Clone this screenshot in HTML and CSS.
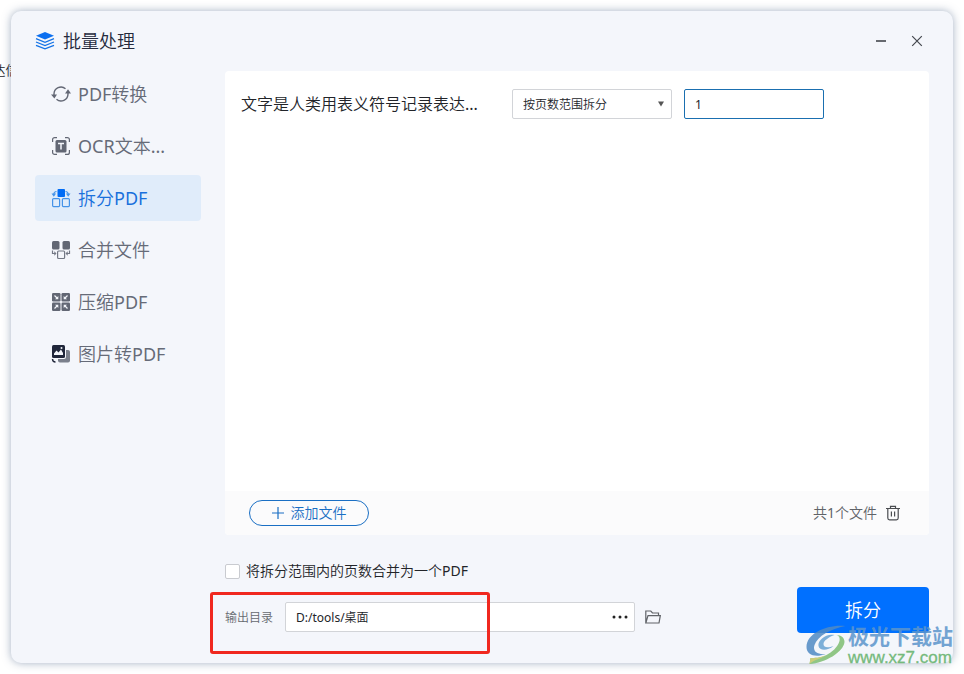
FILE: index.html
```
<!DOCTYPE html>
<html lang="zh-CN">
<head>
<meta charset="utf-8">
<title>批量处理</title>
<link rel="stylesheet" href="styles.css">
</head>
<body>
<div class="backdrop-text"><span>达信</span></div>
<main class="dialog">
  <header class="titlebar">
    <svg class="brand" width="20" height="20" viewBox="0 0 20 20" fill="none" stroke="#1473e6" stroke-width="1.3">
      <path d="M1 4.7 10 1l9 3.7L10 8.4z" fill="#0b6ff0" stroke="none"/>
      <path d="M1 7.7l9 3.6 9-3.6M1 11l9 3.6 9-3.6M1 14.3l9 3.6 9-3.6"/>
    </svg>
    <h1 class="title">批量处理</h1>
    <button class="win-btn" type="button" aria-label="最小化">
      <svg width="12" height="12" viewBox="0 0 12 12"><path d="M1 6h10" stroke="#66696f" stroke-width="2"/></svg>
    </button>
    <button class="win-btn" type="button" aria-label="关闭">
      <svg width="12" height="12" viewBox="0 0 12 12"><path d="M1.2 1.2l9.6 9.6M10.8 1.2l-9.6 9.6" stroke="#44474e" stroke-width="1.2"/></svg>
    </button>
  </header>

  <div class="content">
    <nav class="sidebar">
      <a class="nav-item" href="#convert">
        <svg width="20" height="20" viewBox="0 0 20 20" fill="none" stroke="#626774" stroke-width="1.4">
          <path d="M3 11.5V10a7 7 0 0 1 11.500-5.300M17 8.500V10a7 7 0 0 1-11.500 5.300"/>
          <path d="M0 10.500h6l-2.600 4zM14 9.500h6l-3-4.300z" fill="#626774" stroke="none"/>
        </svg>
        <span>PDF转换</span>
      </a>
      <a class="nav-item" href="#ocr">
        <svg width="20" height="20" viewBox="0 0 20 20" fill="none" stroke="#626774" stroke-width="1.2">
          <path d="M1.6 6V3.600a2 2 0 0 1 2-2H6M14 1.600h2.400a2 2 0 0 1 2 2V6M18.400 14v2.400a2 2 0 0 1-2 2H14M6 18.400H3.600a2 2 0 0 1-2-2V14"/>
          <rect x="4.500" y="4" width="11" height="12.500" rx="1.500" fill="#626774" stroke="none"/>
          <path d="M7 7.500h6M10 7.500v6" stroke="#f4f6fb" stroke-width="1.5"/>
        </svg>
        <span>OCR文本...</span>
      </a>
      <a class="nav-item active" href="#split" aria-current="page">
        <svg width="20" height="20" viewBox="0 0 20 20" fill="none" stroke="#4593e8" stroke-width="1.2">
          <rect x="6.500" y="1" width="7.500" height="8" rx="1" fill="#006cf5" stroke="none"/>
          <rect x="1.600" y="10.600" width="7" height="8" rx="1"/>
          <rect x="11.400" y="10.600" width="7" height="8" rx="1"/>
          <path d="M5.500 3.500Q3 3.500 2.700 6.500M14.500 3.500q2.500 0 2.800 3"/>
          <path d="M.5 5.500h4.600L2.800 8.800zM14.900 5.500h4.600l-2.300 3.300z" fill="#4593e8" stroke="none"/>
        </svg>
        <span>拆分PDF</span>
      </a>
      <a class="nav-item" href="#merge">
        <svg width="20" height="20" viewBox="0 0 20 20" fill="none" stroke="#737885" stroke-width="1.2">
          <rect x="1" y="1" width="7.500" height="8.500" rx="1.500" fill="#626774" stroke="none"/>
          <rect x="11.500" y="1" width="7.500" height="8.500" rx="1.500" fill="#626774" stroke="none"/>
          <rect x="6.600" y="11" width="7" height="7.500" rx="1"/>
          <path d="M1.500 10.500v3H4M18.500 10.500v3H16"/>
          <path d="M3.300 11.300v4.400l2.200-2.200zM16.700 11.300v4.400l-2.200-2.200z" fill="#737885" stroke="none"/>
        </svg>
        <span>合并文件</span>
      </a>
      <a class="nav-item" href="#compress">
        <svg width="20" height="20" viewBox="0 0 20 20" fill="none" stroke="#f4f6fb" stroke-width="1.2">
          <g fill="#626774" stroke="none">
            <rect x="1" y="1" width="8.500" height="8.500" rx="1.200"/><rect x="10.500" y="1" width="8.500" height="8.500" rx="1.200"/>
            <rect x="1" y="10.500" width="8.500" height="8.500" rx="1.200"/><rect x="10.500" y="10.500" width="8.500" height="8.500" rx="1.200"/>
          </g>
          <path d="M3.500 3.500l2.500 2.500M16.500 3.500L14 6M3.500 16.500L6 14M16.500 16.500L14 14"/>
          <path d="M7.300 4v3.300H4zM12.700 4v3.300H16zM7.300 16v-3.300H4zM12.700 16v-3.300H16z" fill="#f4f6fb" stroke="none"/>
        </svg>
        <span>压缩PDF</span>
      </a>
      <a class="nav-item" href="#image">
        <svg width="20" height="20" viewBox="0 0 20 20">
          <rect x="7" y="6" width="12" height="12.500" rx="2" fill="#7b808c"/>
          <rect x="0" y="0" width="15" height="15" rx="2" fill="#f4f6fb"/>
          <rect x="1" y="1" width="13" height="13" rx="1.500" fill="#20263a"/>
          <path d="M3 11V9.500L5.500 6.500l2 2 2.500-3L12 9v2z" fill="#f4f6fb"/>
          <circle cx="10.500" cy="4" r="1" fill="#f4f6fb"/>
          <path d="M1.500 15q0 3 3 3" fill="none" stroke="#20263a" stroke-width="1.4"/>
        </svg>
        <span>图片转PDF</span>
      </a>
    </nav>

    <section class="workspace">
      <div class="panel">
        <div class="file-list">
          <div class="file-row">
            <span class="file-name">文字是人类用表义符号记录表达...</span>
            <span class="select-wrap">
              <select class="field mode" aria-label="拆分方式"><option>按页数范围拆分</option></select>
              <svg class="caret" width="6" height="6" viewBox="0 0 6 6"><path d="M0 .5h6L3 5.500z" fill="#555"/></svg>
            </span>
            <input class="field range" type="text" value="1" aria-label="页数范围">
          </div>
        </div>
        <footer class="panel-footer">
          <button class="add-btn" type="button">
            <svg width="12" height="12" viewBox="0 0 12 12"><path d="M0 6h12M6 0v12" stroke="#1a6fc4" stroke-width="1.2"/></svg>
            <span>添加文件</span>
          </button>
          <span class="count">共1个文件</span>
          <button class="icon-btn" type="button" aria-label="清空">
            <svg width="16" height="16" viewBox="0 0 16 16" fill="none" stroke="#4a4c50" stroke-width="1.2">
              <path d="M1 3.500h14M5.500 3.500V1.400h5v2.100M2.800 3.500v9.500a1.800 1.800 0 0 0 1.800 1.800h6.800a1.800 1.800 0 0 0 1.800-1.800V3.500M6.400 6.500v5M9.600 6.500v5"/>
            </svg>
          </button>
        </footer>
      </div>

      <div class="bottom">
        <div class="options">
          <label class="merge"><input class="check" type="checkbox"><span>将拆分范围内的页数合并为一个PDF</span></label>
          <div class="output">
            <label class="output-label" for="dir">输出目录</label>
            <div class="path-box">
              <input class="path" id="dir" type="text" value="D:/tools/桌面">
              <button class="icon-btn" type="button" aria-label="浏览">
                <svg width="16" height="4" viewBox="0 0 16 4" fill="#222"><circle cx="2" cy="2" r="1.500"/><circle cx="8" cy="2" r="1.500"/><circle cx="14" cy="2" r="1.500"/></svg>
              </button>
            </div>
            <button class="icon-btn" type="button" aria-label="打开文件夹">
              <svg width="16" height="14" viewBox="0 0 16 14" fill="none" stroke="#606368" stroke-width="1.2">
                <path d="M.8 13V1h5l1.700 2h6v2.500M.8 13 3 5.700h12.300L14 13z"/>
              </svg>
            </button>
            <span class="highlight"></span>
          </div>
        </div>
        <button class="primary" type="button">拆分</button>
      </div>
    </section>
  </div>

  <div class="watermark">
    <svg width="43" height="40" viewBox="0 0 42 40">
      <path d="M40 1C22-1 1 8 1 22c0 8 9 11 19 7C11 30 7 26 9 20 12 11 25 4 40 1z" fill="#508ac4"/>
      <path d="M29 10c-8-2-17 5-16 11 1 5 9 5 15 0-5 2-10 2-10-2 0-3 5-7 11-9z" fill="#69a3d2"/>
      <path d="M31 10c7 2 2 14-10 20-6 3-12 3-16 3l-1 6C20 38 38 27 39 17c0-4-3-7-8-7z" fill="#7fbe72"/>
      <path d="M4 39c5-5 10-4 17-9-6 3-12 3-16 3z" fill="#c4c763"/>
    </svg>
    <div class="mark-text"><span class="mark-name">极光下载站</span><span class="mark-url">www.xz7.com</span></div>
  </div>
</main>
</body>
</html>
```

FILE: styles.css
```
* { box-sizing: border-box; }

body {
  margin: 0;
  min-height: 100vh;
  padding: 11px;
  display: flex;
  background: #fff;
  color: #222429;
  font-family: "Noto Sans", "Noto Sans CJK SC DemiLight", "Noto Sans CJK SC", sans-serif;
  font-size: 14px;
  font-weight: 400;
}

button, input, select { font: inherit; color: inherit; margin: 0; }
button { padding: 0; border: 0; background: none; cursor: pointer; }
svg { display: block; flex: none; }

.backdrop-text {
  position: absolute;
  left: 0;
  top: 60px;
  width: 11px;
  display: flex;
  justify-content: center;
  overflow: hidden;
  white-space: nowrap;
  font-size: 13px;
  line-height: 20px;
}

.dialog {
  position: relative;
  flex: 1;
  min-width: 0;
  display: flex;
  flex-direction: column;
  padding: 0 24px 30px;
  border-radius: 10px;
  background: #f4f6fb;
  box-shadow: 0 0 8px rgba(75, 100, 135, .5);
}

.titlebar { display: flex; align-items: center; height: 60px; }
.title { flex: 1; margin: 0 0 0 8px; font-size: 18px; line-height: 24px; font-weight: 350; color: #252a3d; }
.win-btn { width: 24px; height: 24px; margin-left: 12px; display: grid; place-items: center; }

.content { flex: 1; display: grid; grid-template-columns: 166px minmax(0, 1fr); gap: 24px; }

.sidebar { display: flex; flex-direction: column; gap: 6px; }
.nav-item {
  display: flex;
  align-items: center;
  gap: 7px;
  height: 46px;
  padding: 0 16px;
  border-radius: 4px;
  color: #666b78;
  font-size: 18px;
  line-height: 24px;
  white-space: nowrap;
  text-decoration: none;
}
.nav-item.active { background: #e0ecfa; color: #1a70dc; }

.workspace { display: flex; flex-direction: column; gap: 25px; min-width: 0; }
.panel { flex: 1; display: flex; flex-direction: column; border-radius: 4px; background: #fff; overflow: hidden; }
.file-list { flex: 1; padding: 18px 16px; }
.file-row { display: flex; align-items: center; gap: 12px; }
.file-name { width: 259px; font-size: 16px; line-height: 24px; white-space: nowrap; }

.field {
  height: 30px;
  padding: 0 10px;
  border: 1px solid #d2d4d8;
  border-radius: 2px;
  background: #fff;
  font-size: 12px;
  outline: 0;
}
.select-wrap { position: relative; display: flex; }
.mode { width: 160px; appearance: none; }
.caret { position: absolute; right: 8px; top: 12px; pointer-events: none; }
.range { width: 140px; border-color: #1a6fb0; }

.panel-footer { display: flex; align-items: center; height: 44px; padding: 0 28px 0 24px; background: #fbfbfc; }
.add-btn {
  width: 120px;
  height: 26px;
  display: flex;
  align-items: center;
  justify-content: center;
  gap: 7px;
  border: 1px solid #1a6fc4;
  border-radius: 13px;
  color: #1a6fc4;
  line-height: 20px;
}
.count { margin: 0 8px 0 auto; line-height: 20px; color: #606368; }

.bottom { display: flex; align-items: flex-end; justify-content: space-between; }
.options { display: flex; flex-direction: column; gap: 20px; padding-bottom: 1px; }
.merge { display: flex; align-items: center; gap: 6px; height: 22px; line-height: 22px; }
.check { appearance: none; width: 15px; height: 15px; border: 1px solid #c9cbd0; border-radius: 2px; background: #fff; }
.output { position: relative; display: flex; align-items: center; gap: 10px; }
.output-label { width: 50px; font-size: 12px; white-space: nowrap; color: #66696f; }
.path-box {
  width: 350px;
  height: 30px;
  display: flex;
  align-items: center;
  padding: 0 6px 0 10px;
  border: 1px solid #d2d4d8;
  border-radius: 2px;
  background: #fff;
}
.path { flex: 1; min-width: 0; padding: 0; border: 0; outline: 0; background: none; font-size: 12px; }
.primary { width: 132px; height: 46px; border-radius: 4px; background: #0070ff; color: #fff; font-size: 18px; line-height: 24px; }

.highlight {
  position: absolute;
  left: -15px;
  top: -10px;
  width: 280px;
  height: 62px;
  border: 3px solid #f0281f;
  border-radius: 3px;
  pointer-events: none;
}

.watermark {
  position: absolute;
  right: 0;
  bottom: -4px;
  display: flex;
  align-items: center;
  opacity: .85;
  pointer-events: none;
}
.mark-text { display: flex; flex-direction: column; gap: 2px; white-space: nowrap; }
.mark-name { font-family: "Noto Sans CJK SC", sans-serif; font-size: 21px; line-height: 24px; font-weight: 700; color: #5c95cc; }
.mark-url { font-family: "Liberation Sans", sans-serif; font-size: 17px; line-height: 18px; color: #5fb067; -webkit-text-stroke: 0.3px #5fb067; }
```
